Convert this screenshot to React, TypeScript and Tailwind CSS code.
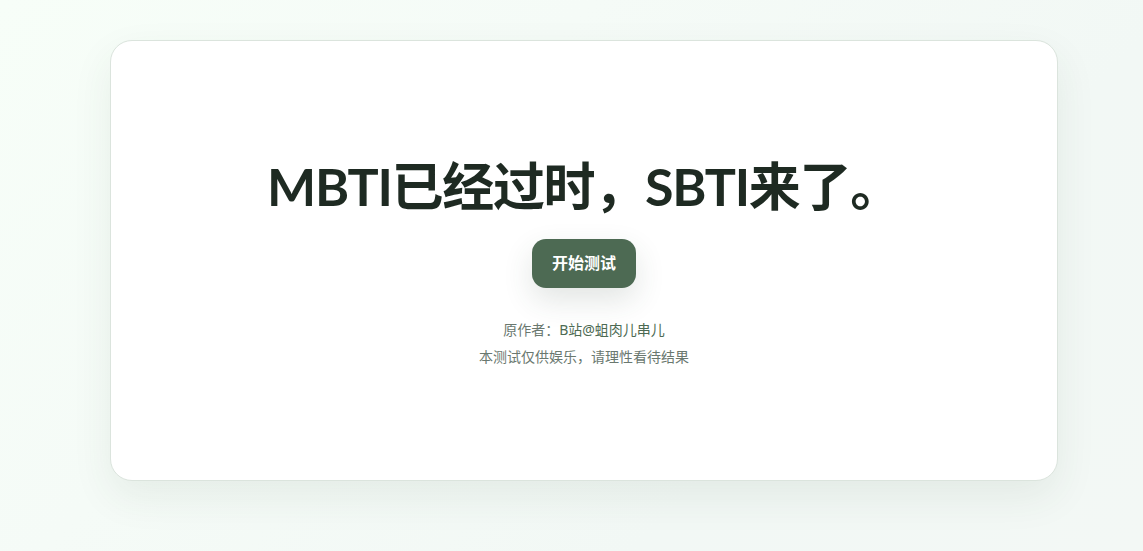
export default function App() {
  return (
    <div className="min-h-screen bg-[linear-gradient(135deg,#f7fef8_0%,#f5fbf7_35%,#f2f8f5_70%,#f3f8f5_100%)] py-10 pr-6 pl-[49px] font-['Noto_Sans','Noto_Sans_CJK_SC',sans-serif] text-[#1e2a22]">
      <main className="mx-auto w-full max-w-[948px]">
        <section className="flex min-h-[441px] flex-col items-center justify-center rounded-[22px] border border-[#dbe4dd] bg-white px-6 pt-[5px] text-center shadow-[0_16px_40px_rgba(47,73,55,0.08)]">
          <h1 className="font-['Lato','Noto_Sans_CJK_SC',sans-serif] text-[52px] leading-[58px] font-bold tracking-tight">
            MBTI已经过时，SBTI来了。
          </h1>
          <button
            type="button"
            className="mt-6 cursor-pointer rounded-[14px] bg-[#4d6a53] px-5 py-3 text-base leading-[25px] font-bold text-white shadow-[0_12px_30px_rgba(47,73,55,0.14)]"
          >
            开始测试
          </button>
          <div className="mt-7 text-sm leading-[27px] text-[#6a786f]">
            <p>
              原作者：
              <a href="#author" className="text-[#4d6a53]">
                B站@蛆肉儿串儿
              </a>
            </p>
            <p>本测试仅供娱乐，请理性看待结果</p>
          </div>
        </section>
      </main>
    </div>
  );
}
